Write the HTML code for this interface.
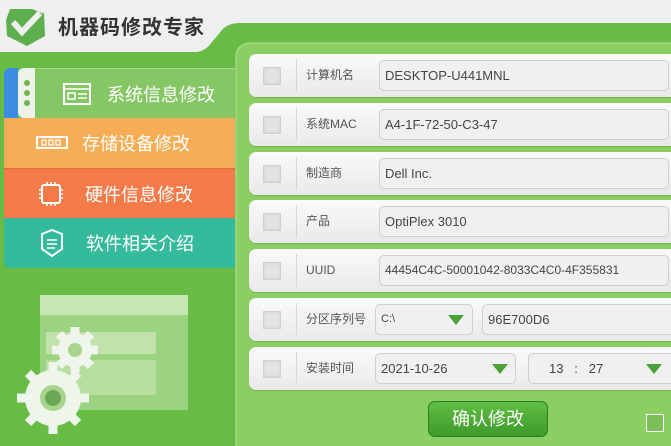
<!DOCTYPE html>
<html><head><meta charset="utf-8"><style>
*{margin:0;padding:0;box-sizing:border-box}
body{width:671px;height:446px;overflow:hidden;position:relative;background:#efefef;font-family:"Liberation Sans","Noto Sans CJK SC",sans-serif}
.abs{position:absolute}
.title{left:58px;top:11px;font-size:20px;font-weight:bold;color:#333;letter-spacing:1px}
.nav{left:4px;width:231px;height:50px;color:#fff;font-size:18px;display:flex;align-items:center}
.row{left:249px;width:440px;height:43px;border-radius:7px;background:linear-gradient(#fafafa,#e9e9e9);box-shadow:0 1px 1px rgba(0,0,0,.15)}
.cb{position:absolute;left:14px;top:13px;width:18px;height:18px;background:#e4e4e4;border:1px solid #d0d0d0;box-shadow:inset 0 0 3px rgba(0,0,0,.1)}
.dv{position:absolute;left:47px;top:5px;width:1px;height:33px;background:#d6d6d6}
.lb{position:absolute;left:57px;top:0;line-height:43px;font-size:12px;color:#555}
.in{position:absolute;top:6px;height:31px;background:#f0f0f0;border:1px solid #cfcfcf;border-radius:5px;font-size:13px;color:#444;padding:0 0 0 5px;line-height:29px}
.tri{position:absolute;width:0;height:0;border-left:8px solid transparent;border-right:8px solid transparent;border-top:10px solid #4aa238;top:10px}
</style></head><body>
<svg class="abs" style="left:0;top:0" width="671" height="446">
<path d="M0 52 L195 52 Q205 52 212 42 L222 30 Q228 23 240 23 L671 23 L671 446 L0 446Z" fill="#68bb45"/>
<path d="M236 446 L236 58 Q236 43 252 43 L671 43 L671 446Z" fill="#8bcf63"/>
<path d="M236 446 L236 58 Q236 43 252 43 L671 43" fill="none" stroke="#b7e09c" stroke-width="1"/>
<path d="M10 9 L36 9 L44 13 L45 36 L27 46 L7 36 L6 20Z" fill="#5dae4c"/>
<path d="M13 22 L22 32 L40 13" fill="none" stroke="#efefef" stroke-width="6"/>
<path d="M32 9 L40 9 L44 14" fill="#efefef"/>
<rect x="40" y="295" width="148" height="115" fill="#a9d98f" opacity=".8"/>
<rect x="40" y="295" width="148" height="20" fill="#c6e6b2"/>
<rect x="46" y="332" width="110" height="22" fill="#c1e3ab"/>
<rect x="46" y="360" width="110" height="35" fill="#b8dfa0"/>
<g fill="#eef5ea"><circle cx="75" cy="350" r="17"/><circle cx="53" cy="398" r="28"/></g>
<g stroke="#eef5ea" stroke-width="9" fill="none"><path d="M75 327v46M52 350h46M59 334l32 32M91 334l-32 32"/><path d="M53 362v72M17 398h72M28 373l50 50M78 373l-50 50"/></g>
<circle cx="75" cy="350" r="7" fill="#a7d58d"/><circle cx="53" cy="398" r="13" fill="#a7d58d"/><circle cx="53" cy="398" r="8" fill="#6aa858"/>
</svg>
<div class="abs title">机器码修改专家</div>
<div class="abs" style="left:4px;top:68px;width:14px;height:50px;background:#3a8de0;border-radius:6px 0 0 0"></div>
<div class="abs" style="left:18px;top:68px;width:17px;height:50px;background:#eef3ea;border-radius:6px 0 0 6px"></div>
<div class="abs" style="left:24px;top:80px;width:6px;height:6px;border-radius:50%;background:#6cb64e;box-shadow:0 10px 0 #6cb64e,0 20px 0 #6cb64e"></div>
<div class="abs nav" style="left:35px;width:200px;top:68px;background:#86c765;border-top:1px solid #a5d88a"><svg width="28" height="24" style="margin-left:28px;margin-right:16px"><rect x="1" y="2" width="26" height="20" fill="none" stroke="#fff" stroke-width="2"/><path d="M1 7h26M5 11h7v6h-7zM15 12h9M15 16h9" stroke="#fff" stroke-width="1.5" fill="none"/></svg>系统信息修改</div>
<div class="abs nav" style="top:118px;background:#f5ae55"><svg width="32" height="16" style="margin-left:32px;margin-right:14px"><rect x="1" y="2" width="30" height="11" fill="none" stroke="#fff" stroke-width="2"/><path d="M6 5h4v5h-4zM13 5h4v5h-4zM20 5h4v5h-4z" stroke="#fff" stroke-width="1.3" fill="none"/></svg>存储设备修改</div>
<div class="abs nav" style="top:168px;background:#f27b49;border-top:1px solid #e06a38"><svg width="26" height="26" style="margin-left:34px;margin-right:21px"><rect x="4" y="4" width="18" height="18" rx="2" fill="none" stroke="#fff" stroke-width="2"/><path d="M1 9h3M1 13h3M1 17h3M22 9h3M22 13h3M22 17h3M9 1v3M13 1v3M17 1v3M9 22v3M13 22v3M17 22v3" stroke="#fff" stroke-width="1.5"/></svg>硬件信息修改</div>
<div class="abs nav" style="top:218px;background:#35bb9b;border-radius:0 0 0 6px"><svg width="24" height="28" style="margin-left:36px;margin-right:22px"><path d="M2 5 L12 1 L22 5 L22 20 L12 27 L2 20Z" fill="none" stroke="#fff" stroke-width="2"/><path d="M7 11h10M7 15h10M7 19h8" stroke="#fff" stroke-width="1.5"/></svg>软件相关介绍</div>

<div class="abs row" style="top:54px"><div class="cb"></div><div class="dv"></div><div class="lb">计算机名</div><div class="in" style="left:130px;width:290px">DESKTOP-U441MNL</div></div>
<div class="abs row" style="top:103px"><div class="cb"></div><div class="dv"></div><div class="lb">系统MAC</div><div class="in" style="left:130px;width:290px">A4-1F-72-50-C3-47</div></div>
<div class="abs row" style="top:152px"><div class="cb"></div><div class="dv"></div><div class="lb">制造商</div><div class="in" style="left:130px;width:290px">Dell Inc.</div></div>
<div class="abs row" style="top:200px"><div class="cb"></div><div class="dv"></div><div class="lb">产品</div><div class="in" style="left:130px;width:290px">OptiPlex 3010</div></div>
<div class="abs row" style="top:249px"><div class="cb"></div><div class="dv"></div><div class="lb">UUID</div><div class="in" style="left:130px;width:290px;font-size:12px">44454C4C-50001042-8033C4C0-4F355831</div></div>
<div class="abs row" style="top:298px"><div class="cb"></div><div class="dv"></div><div class="lb">分区序列号</div><div class="in" style="left:126px;width:98px;font-size:11px">C:\<div class="tri" style="left:72px"></div></div><div class="in" style="left:233px;width:200px">96E700D6</div></div>
<div class="abs row" style="top:347px"><div class="cb"></div><div class="dv"></div><div class="lb">安装时间</div><div class="in" style="left:126px;width:141px">2021-10-26<div class="tri" style="left:116px"></div></div><div class="in" style="left:279px;width:150px;padding-left:20px">13&nbsp;&nbsp;&nbsp;:&nbsp;&nbsp;&nbsp;27<div class="tri" style="left:117px"></div></div></div>

<div class="abs" style="left:428px;top:401px;width:120px;height:36px;border-radius:7px;background:linear-gradient(#5fbf42,#3f9a2c);border:1px solid #2f7a22;color:#fff;font-size:18px;text-align:center;line-height:34px">确认修改</div>
<div class="abs" style="left:646px;top:414px;width:18px;height:18px;border:1px solid #fff;background:#7cbf58"></div>
</body></html>
